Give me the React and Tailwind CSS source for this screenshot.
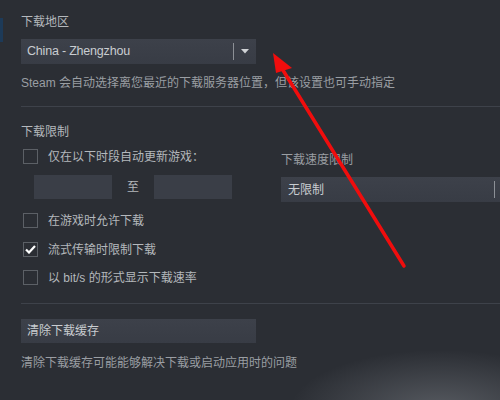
import React from "react";

const font = { fontFamily: '"Liberation Sans", "Noto Sans CJK SC", sans-serif' };

const Checkbox = ({ checked, label }) => (
  <div className="flex items-center h-[15px] ml-[2px]">
    <div className="w-[15px] h-[15px] shrink-0 border border-[#5c6066] flex items-center justify-center">
      {checked && (
        <svg width="11" height="9" viewBox="0 0 11 9">
          <path d="M1 4.5 L4 7.5 L10 1" stroke="#ffffff" strokeWidth="2.2" fill="none" />
        </svg>
      )}
    </div>
    <span className="ml-[10px] text-[12px] leading-[16px] text-[#b4b8bc]">{label}</span>
  </div>
);

const App = () => {
  return (
    <div
      className="relative flex w-[500px] h-[400px] overflow-hidden bg-[#2b2e34]"
      style={font}
    >
      {/* sidebar sliver */}
      <div className="w-[3px] shrink-0 pt-[18px]">
        <div className="h-[24px] bg-[#1d3a58]" />
      </div>

      <div className="flex-1 min-w-0 pl-[18px] flex flex-col">
        <div className="pt-[14px] text-[12px] leading-[16px] text-[#b4b8bc]">下载地区</div>

        {/* region dropdown */}
        <div className="mt-[9px] w-[235px] h-[25px] bg-gradient-to-b from-[#3d414a] to-[#383c45] flex items-center">
          <span className="ml-[6px] flex-1 text-[12.5px] tracking-[-0.2px] text-[#c9cdd1]">China - Zhengzhou</span>
          <div className="w-px h-[17px] bg-[#8c9096]" />
          <svg className="mx-[7px]" width="8" height="5" viewBox="0 0 8 5">
            <path d="M0 0 H8 L4 4.5 Z" fill="#d0d3d6" />
          </svg>
        </div>

        <div className="mt-[11px] text-[12px] leading-[16px] text-[#9a9ea3] whitespace-nowrap">
          Steam 会自动选择离您最近的下载服务器位置，但该设置也可手动指定
        </div>

        <div className="mt-[15px] h-px bg-[#3e424a]" />

        <div className="mt-[17px] text-[12px] leading-[16px] text-[#b4b8bc]">下载限制</div>

        <div className="flex">
          {/* left column */}
          <div className="w-[260px] shrink-0 flex flex-col">
            <div className="mt-[9px]">
              <Checkbox label="仅在以下时段自动更新游戏：" />
            </div>
            <div className="mt-[11px] ml-[13px] flex items-center h-[24px]">
              <div className="w-[78px] h-[24px] bg-[#3a3e47]" />
              <span className="w-[42px] text-center text-[12px] text-[#b4b8bc]">至</span>
              <div className="w-[78px] h-[24px] bg-[#3a3e47]" />
            </div>
            <div className="mt-[14px]">
              <Checkbox label="在游戏时允许下载" />
            </div>
            <div className="mt-[14px]">
              <Checkbox checked label="流式传输时限制下载" />
            </div>
            <div className="mt-[13px]">
              <Checkbox label="以 bit/s 的形式显示下载速率" />
            </div>
          </div>

          {/* right column */}
          <div className="flex flex-col shrink-0">
            <div className="mt-[12px] text-[12px] leading-[16px] text-[#9a9ea3]">下载速度限制</div>
            <div className="mt-[9px] w-[240px] h-[25px] bg-gradient-to-b from-[#3d414a] to-[#383c45] flex items-center">
              <span className="ml-[7px] w-[206px] text-[12px] text-[#c9cdd1]">无限制</span>
              <div className="w-px h-[17px] bg-[#8c9096]" />
            </div>
          </div>
        </div>

        <div className="mt-[18px] h-px bg-[#3e424a]" />

        <div className="mt-[15px] w-[235px] h-[24px] bg-gradient-to-b from-[#3d414a] to-[#383c45] flex items-center">
          <span className="ml-[6px] text-[12px] text-[#c9cdd1]">清除下载缓存</span>
        </div>

        <div className="mt-[12px] text-[12px] leading-[16px] text-[#9a9ea3]">
          清除下载缓存可能能够解决下载或启动应用时的问题
        </div>
      </div>

      {/* watermark glow */}
      <div className="pointer-events-none absolute inset-0 bg-[radial-gradient(ellipse_150px_60px_at_440px_410px,rgba(200,205,212,0.28),transparent)]" />

      {/* red annotation arrow */}
      <svg className="pointer-events-none absolute inset-0" width="500" height="400" viewBox="0 0 500 400">
        <line x1="404" y1="266" x2="281" y2="67" stroke="#f00d0d" strokeWidth="3.5" strokeLinecap="round" />
        <path d="M273 53 L292 68 L276 73 Z" fill="#f00d0d" />
      </svg>
    </div>
  );
};

export default App;
